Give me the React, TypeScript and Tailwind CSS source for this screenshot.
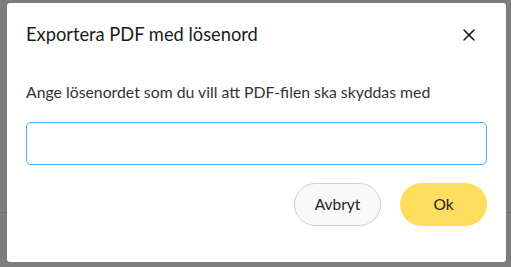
import { X } from 'lucide-react';

export default function App() {
  return (
    <div className="relative h-[267px] w-[511px] overflow-hidden bg-[#7d7d7d] font-['Lato',sans-serif]">
      <div className="absolute left-0 right-0 top-[212px] h-px bg-[#6a6a6a]" />
      <div className="absolute left-[7px] top-[3px] flex h-[259px] w-[499px] flex-col rounded-[3px] bg-white px-[19px]">
        <div className="flex h-[62px] items-center justify-between pt-[2px]">
          <h2 className="text-[18.3px] text-[#1a1a1a]">Exportera PDF med lösenord</h2>
          <button className="mr-[8px] text-[#111]">
            <X className="h-[20px] w-[20px]" strokeWidth={1.8} />
          </button>
        </div>
        <p className="mt-[17px] text-[15.8px] leading-[20px] text-[#333]">
          Ange lösenordet som du vill att PDF-filen ska skyddas med
        </p>
        <input
          type="password"
          className="mt-[20px] h-[43px] w-full rounded-[5px] border border-[#45acf3] outline-none"
        />
        <div className="mt-[18px] flex justify-end gap-[19px]">
          <button className="h-[43px] w-[87px] rounded-full border border-[#cfcfcf] bg-[#f9f9f9] text-[15.5px] text-[#222]">
            Avbryt
          </button>
          <button className="h-[43px] w-[87px] rounded-full bg-[#ffdd5e] text-[15.5px] text-[#222]">
            Ok
          </button>
        </div>
      </div>
    </div>
  );
}
